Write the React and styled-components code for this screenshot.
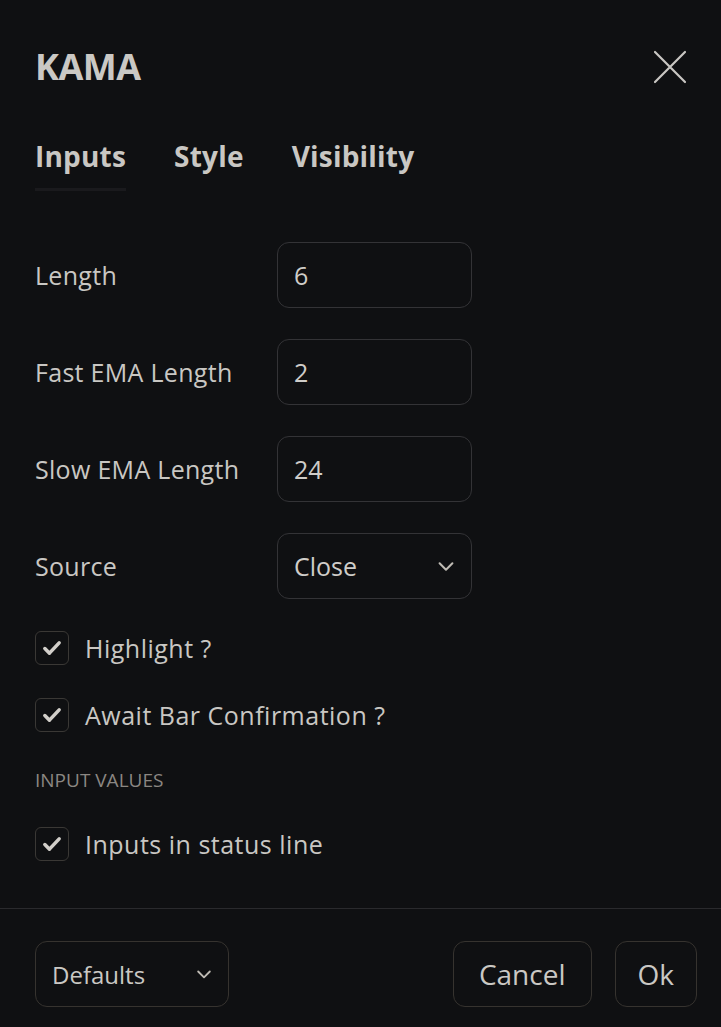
import React, { useState } from 'react';
import styled, { createGlobalStyle } from 'styled-components';

const GlobalStyle = createGlobalStyle`
  html, body {
    margin: 0;
    padding: 0;
    background: #0f1012;
  }
  body {
    font-family: 'Open Sans', 'Noto Sans', sans-serif;
    color: #c9c7c3;
  }
`;

const fields = [
  { label: 'Length', value: '6' },
  { label: 'Fast EMA Length', value: '2' },
  { label: 'Slow EMA Length', value: '24' },
];

const Chevron = ({ size = 22 }) => (
  <svg width={size} height={size} viewBox="0 0 24 24" fill="none">
    <path d="M5 9l7 7 7-7" stroke="#bfbbb4" strokeWidth="2.2" strokeLinecap="round" strokeLinejoin="round" />
  </svg>
);

const Check = ({ on, onToggle, children }) => (
  <CheckRow onClick={onToggle}>
    <Box>
      {on && (
        <svg width="22" height="22" viewBox="0 0 20 20" fill="none">
          <path d="M3.5 10.5l4.2 4.2 8.8-9.4" stroke="#d2cfca" strokeWidth="3.2" strokeLinecap="round" strokeLinejoin="round" />
        </svg>
      )}
    </Box>
    <CheckLabel>{children}</CheckLabel>
  </CheckRow>
);

const App = () => {
  const [checks, setChecks] = useState({ highlight: true, await: true, status: true });
  const toggle = (k) => setChecks((c) => ({ ...c, [k]: !c[k] }));

  return (
    <>
      <GlobalStyle />
      <Dialog>
        <Header>
          <Title>KAMA</Title>
          <CloseButton aria-label="Close">
            <svg width="34" height="34" viewBox="0 0 34 34" fill="none">
              <path d="M2 2l30 30M32 2L2 32" stroke="#c9c7c3" strokeWidth="2.2" strokeLinecap="round" />
            </svg>
          </CloseButton>
        </Header>

        <Tabs>
          <Tab active>Inputs</Tab>
          <Tab>Style</Tab>
          <Tab>Visibility</Tab>
        </Tabs>

        <Body>
          {fields.map((f) => (
            <FieldRow key={f.label}>
              <FieldLabel>{f.label}</FieldLabel>
              <InputBox>{f.value}</InputBox>
            </FieldRow>
          ))}
          <FieldRow>
            <FieldLabel>Source</FieldLabel>
            <InputBox select>
              Close
              <Chevron />
            </InputBox>
          </FieldRow>

          <Checks>
            <Check on={checks.highlight} onToggle={() => toggle('highlight')}>Highlight ?</Check>
            <Check on={checks.await} onToggle={() => toggle('await')}>Await Bar Confirmation ?</Check>
          </Checks>

          <SectionTitle>INPUT VALUES</SectionTitle>
          <Check on={checks.status} onToggle={() => toggle('status')}>Inputs in status line</Check>
        </Body>

        <Footer>
          <Button wide>
            Defaults
            <Chevron size={20} />
          </Button>
          <Actions>
            <Button>Cancel</Button>
            <Button>Ok</Button>
          </Actions>
        </Footer>
      </Dialog>
    </>
  );
};

export default App;

const Dialog = styled.div`
  width: 721px;
  height: 1027px;
  display: flex;
  flex-direction: column;
  background: #0f1012;
  box-sizing: border-box;
`;

const Header = styled.div`
  display: flex;
  justify-content: space-between;
  align-items: center;
  padding: 44px 34px 0 35px;
`;

const Title = styled.h1`
  margin: 0;
  font-size: 36px;
  font-weight: 700;
  line-height: 46px;
  color: #cac8c4;
  letter-spacing: -0.5px;
`;

const CloseButton = styled.button`
  background: none;
  border: none;
  padding: 0;
  display: flex;
  cursor: pointer;
`;

const Tabs = styled.div`
  display: flex;
  gap: 48px;
  padding: 0 35px;
  margin-top: 46px;
`;

const Tab = styled.div`
  font-size: 28px;
  font-weight: 700;
  line-height: 40px;
  padding-bottom: 12px;
  color: #c9c7c3;
  letter-spacing: 0.2px;
  border-bottom: 3px solid ${({ active }) => (active ? '#1a1a1d' : 'transparent')};
  cursor: pointer;
`;

const Body = styled.div`
  flex: 1;
  display: flex;
  flex-direction: column;
  padding: 51px 35px 0;
`;

const FieldRow = styled.div`
  display: grid;
  grid-template-columns: 242px 195px;
  align-items: center;
  margin-bottom: 31px;
`;

const FieldLabel = styled.div`
  font-size: 25px;
  letter-spacing: 0.3px;
  color: #c9c7c3;
`;

const InputBox = styled.div`
  height: 66px;
  box-sizing: border-box;
  border: 1px solid #333336;
  border-radius: 12px;
  display: flex;
  align-items: center;
  justify-content: ${({ select }) => (select ? 'space-between' : 'flex-start')};
  padding: 0 14px 0 16px;
  font-size: 25px;
  color: #cfcdc9;
`;

const Checks = styled.div`
  display: flex;
  flex-direction: column;
  gap: 33px;
  margin-top: 1px;
`;

const CheckRow = styled.label`
  display: flex;
  align-items: center;
  gap: 16px;
  cursor: pointer;
`;

const Box = styled.span`
  width: 34px;
  height: 34px;
  box-sizing: border-box;
  border: 1px solid #3a3835;
  border-radius: 6px;
  display: flex;
  align-items: center;
  justify-content: center;
`;

const CheckLabel = styled.span`
  font-size: 25px;
  letter-spacing: 0.5px;
  color: #c9c7c3;
`;

const SectionTitle = styled.div`
  font-size: 19px;
  color: #8b8782;
  margin: 35px 0 34px;
  text-transform: uppercase;
`;

const Footer = styled.div`
  border-top: 1px solid #2a2a2d;
  display: flex;
  justify-content: space-between;
  align-items: center;
  padding: 32px 24px 20px 35px;
`;

const Actions = styled.div`
  display: flex;
  gap: 23px;
`;

const Button = styled.button`
  height: 66px;
  box-sizing: border-box;
  border: 1px solid #36332f;
  border-radius: 12px;
  background: #0f1012;
  color: #cac8c4;
  font-family: 'Open Sans', 'Noto Sans', sans-serif;
  display: flex;
  align-items: center;
  justify-content: space-between;
  gap: 12px;
  padding: ${({ wide }) => (wide ? '0 14px 0 16px' : '0 22px')};
  width: ${({ wide }) => (wide ? '194px' : 'auto')};
  min-width: ${({ wide }) => (wide ? '0' : '82px')};
  font-size: ${({ wide }) => (wide ? '24px' : '28px')};
  cursor: pointer;
  &:first-child:not(:last-child) {
    padding: ${({ wide }) => (wide ? '0 14px 0 16px' : '0 25px')};
  }
`;
